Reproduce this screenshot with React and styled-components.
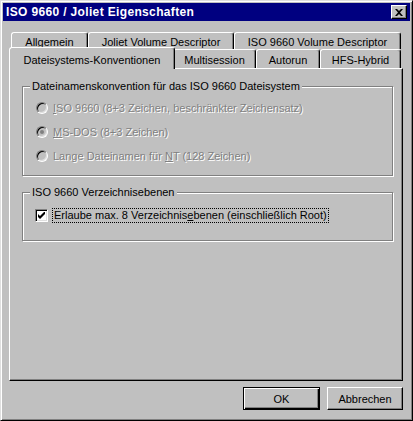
import React from "react";
import styled, { createGlobalStyle } from "styled-components";

const GlobalStyle = createGlobalStyle`
  html, body {
    margin: 0;
    padding: 0;
    background: #c0c0c0;
  }
  body {
    font-family: "Liberation Sans", Arial, sans-serif;
    font-size: 11px;
    color: #000;
  }
`;

const Window = styled.div`
  width: 413px;
  height: 421px;
  box-sizing: border-box;
  background: #c0c0c0;
  border: 1px solid;
  border-color: #dfdfdf #000 #000 #dfdfdf;
  box-shadow: inset 1px 1px #fff, inset -1px -1px #808080;
  padding: 2px;
  display: flex;
  flex-direction: column;
`;

const TitleBar = styled.div`
  height: 18px;
  background: #000080;
  color: #fff;
  font-weight: bold;
  font-size: 12px;
  letter-spacing: 0.35px;
  display: flex;
  align-items: center;
  justify-content: space-between;
  padding: 0 3px 0 3px;
`;

const CloseButton = styled.div`
  width: 16px;
  height: 14px;
  box-sizing: border-box;
  background: #c0c0c0;
  border: 1px solid;
  border-color: #fff #000 #000 #fff;
  box-shadow: inset -1px -1px #808080;
  display: flex;
  align-items: center;
  justify-content: center;
`;

const Body = styled.div`
  padding: 11px 7px 0 6px;
  display: flex;
  flex-direction: column;
`;

const Tabs = styled.div`
  margin-left: 2px;
  width: 390px;
  display: flex;
  flex-direction: column;
`;

const TabRow = styled.div`
  display: flex;
  height: ${(p) => p.$h}px;
`;

const Tab = styled.div`
  width: ${(p) => p.$w}px;
  box-sizing: border-box;
  border: 1px solid;
  border-bottom: none;
  border-color: #fff #000 transparent #fff;
  border-radius: 3px 3px 0 0;
  box-shadow: inset -1px 0 #808080;
  background: #c0c0c0;
  display: flex;
  justify-content: center;
  padding-top: ${(p) => p.$pt ?? 3}px;
  white-space: nowrap;
`;

const ActiveTab = styled(Tab)`
  width: ${(p) => p.$w + 4}px;
  margin: -2px -2px -1px -2px;
  padding-top: 6px;
  position: relative;
  z-index: 2;
`;

const Panel = styled.div`
  height: 313px;
  box-sizing: border-box;
  border: 1px solid;
  border-color: #fff #000 #000 #fff;
  box-shadow: inset -1px -1px #808080;
  padding: 17px 0 0 12px;
  display: flex;
  flex-direction: column;
  gap: 16px;
  position: relative;
  z-index: 1;
`;

const Group = styled.div`
  position: relative;
  width: 371px;
  height: ${(p) => p.$h}px;
  box-sizing: border-box;
  border: 1px solid #808080;
  box-shadow: inset 1px 1px #fff, 1px 1px #fff;
  padding: ${(p) => p.$pad};
  display: flex;
  flex-direction: column;
`;

const Caption = styled.span`
  position: absolute;
  top: -7px;
  left: 7px;
  padding: 0 2px;
  background: #c0c0c0;
  line-height: 13px;
  white-space: nowrap;
`;

const OptionRow = styled.div`
  height: 24px;
  display: flex;
  align-items: center;
  gap: 5px;
`;

const RadioCircle = styled.span`
  width: 12px;
  height: 12px;
  flex: none;
  box-sizing: border-box;
  border-radius: 50%;
  border: 1px solid;
  border-color: #808080 #fff #fff #808080;
  box-shadow: inset 1px 1px #000, inset -1px -1px #dfdfdf;
  background: #c0c0c0;
  display: flex;
  align-items: center;
  justify-content: center;
  &::after {
    content: "";
    width: 4px;
    height: 4px;
    border-radius: 50%;
    background: ${(p) => (p.$on ? "#808080" : "transparent")};
  }
`;

const DisabledText = styled.span`
  color: #808080;
  text-shadow: 1px 1px #fff;
  white-space: nowrap;
  u {
    text-decoration: underline;
  }
`;

const CheckRow = styled.div`
  display: flex;
  align-items: center;
  gap: 5px;
`;

const CheckBox = styled.span`
  width: 13px;
  height: 13px;
  flex: none;
  box-sizing: border-box;
  border: 1px solid;
  border-color: #808080 #fff #fff #808080;
  box-shadow: inset 1px 1px #000, inset -1px -1px #dfdfdf;
  background: #fff;
  display: flex;
  align-items: center;
  justify-content: center;
`;

const FocusLabel = styled.span`
  outline: 1px dotted #000;
  padding: 0 1px 0 1px;
  line-height: 13px;
  white-space: nowrap;
`;

const Footer = styled.div`
  display: flex;
  justify-content: flex-end;
  gap: 7px;
  margin-top: 6px;
`;

const Button = styled.button`
  width: ${(p) => p.$w}px;
  height: 23px;
  box-sizing: border-box;
  font: inherit;
  color: #000;
  background: #c0c0c0;
  border: 1px solid;
  border-color: ${(p) => (p.$default ? "#000" : "#fff #000 #000 #fff")};
  box-shadow: ${(p) =>
    p.$default
      ? "inset 1px 1px #fff, inset -1px -1px #000, inset -2px -2px #808080"
      : "inset -1px -1px #808080"};
  padding: 0;
`;

const CheckMark = () => (
  <svg width="7" height="7" viewBox="0 0 7 7">
    <path d="M0 2v3l2 2 5-5V-1L2 4z" fill="#000" />
  </svg>
);

const CloseX = () => (
  <svg width="8" height="7" viewBox="0 0 8 7">
    <path
      d="M0 0h2l2 2 2-2h2L5 3.5 8 7H6L4 5 2 7H0l3-3.5z"
      fill="#000"
    />
  </svg>
);

export default function App() {
  return (
    <>
      <GlobalStyle />
      <Window>
        <TitleBar>
          <span>ISO 9660 / Joliet Eigenschaften</span>
          <CloseButton>
            <CloseX />
          </CloseButton>
        </TitleBar>
        <Body>
          <Tabs>
            <TabRow $h={17}>
              <Tab $w={77}>Allgemein</Tab>
              <Tab $w={146}>Joliet Volume Descriptor</Tab>
              <Tab $w={167}>ISO 9660 Volume Descriptor</Tab>
            </TabRow>
            <TabRow $h={19}>
              <ActiveTab $w={162}>Dateisystems-Konventionen</ActiveTab>
              <Tab $w={83} $pt={4}>Multisession</Tab>
              <Tab $w={64} $pt={4}>Autorun</Tab>
              <Tab $w={81} $pt={4}>HFS-Hybrid</Tab>
            </TabRow>
          </Tabs>
          <Panel>
            <Group $h={90} $pad="9px 0 0 13px">
              <Caption>Dateinamenskonvention für das ISO 9660 Dateisystem</Caption>
              <OptionRow>
                <RadioCircle />
                <DisabledText>
                  <u>I</u>SO 9660 (8+3 Zeichen, beschränkter Zeichensatz)
                </DisabledText>
              </OptionRow>
              <OptionRow>
                <RadioCircle $on />
                <DisabledText>
                  <u>M</u>S-DOS (8+3 Zeichen)
                </DisabledText>
              </OptionRow>
              <OptionRow>
                <RadioCircle />
                <DisabledText>
                  Lange Dateinamen für <u>N</u>T (128 Zeichen)
                </DisabledText>
              </OptionRow>
            </Group>
            <Group $h={49} $pad="16px 0 0 12px">
              <Caption>ISO 9660 Verzeichnisebenen</Caption>
              <CheckRow>
                <CheckBox>
                  <CheckMark />
                </CheckBox>
                <FocusLabel>
                  Erlaube max. 8 Verzeichnis<u>e</u>benen (einschließlich Root)
                </FocusLabel>
              </CheckRow>
            </Group>
          </Panel>
          <Footer>
            <Button $w={77} $default>
              OK
            </Button>
            <Button $w={76}>Abbrechen</Button>
          </Footer>
        </Body>
      </Window>
    </>
  );
}
